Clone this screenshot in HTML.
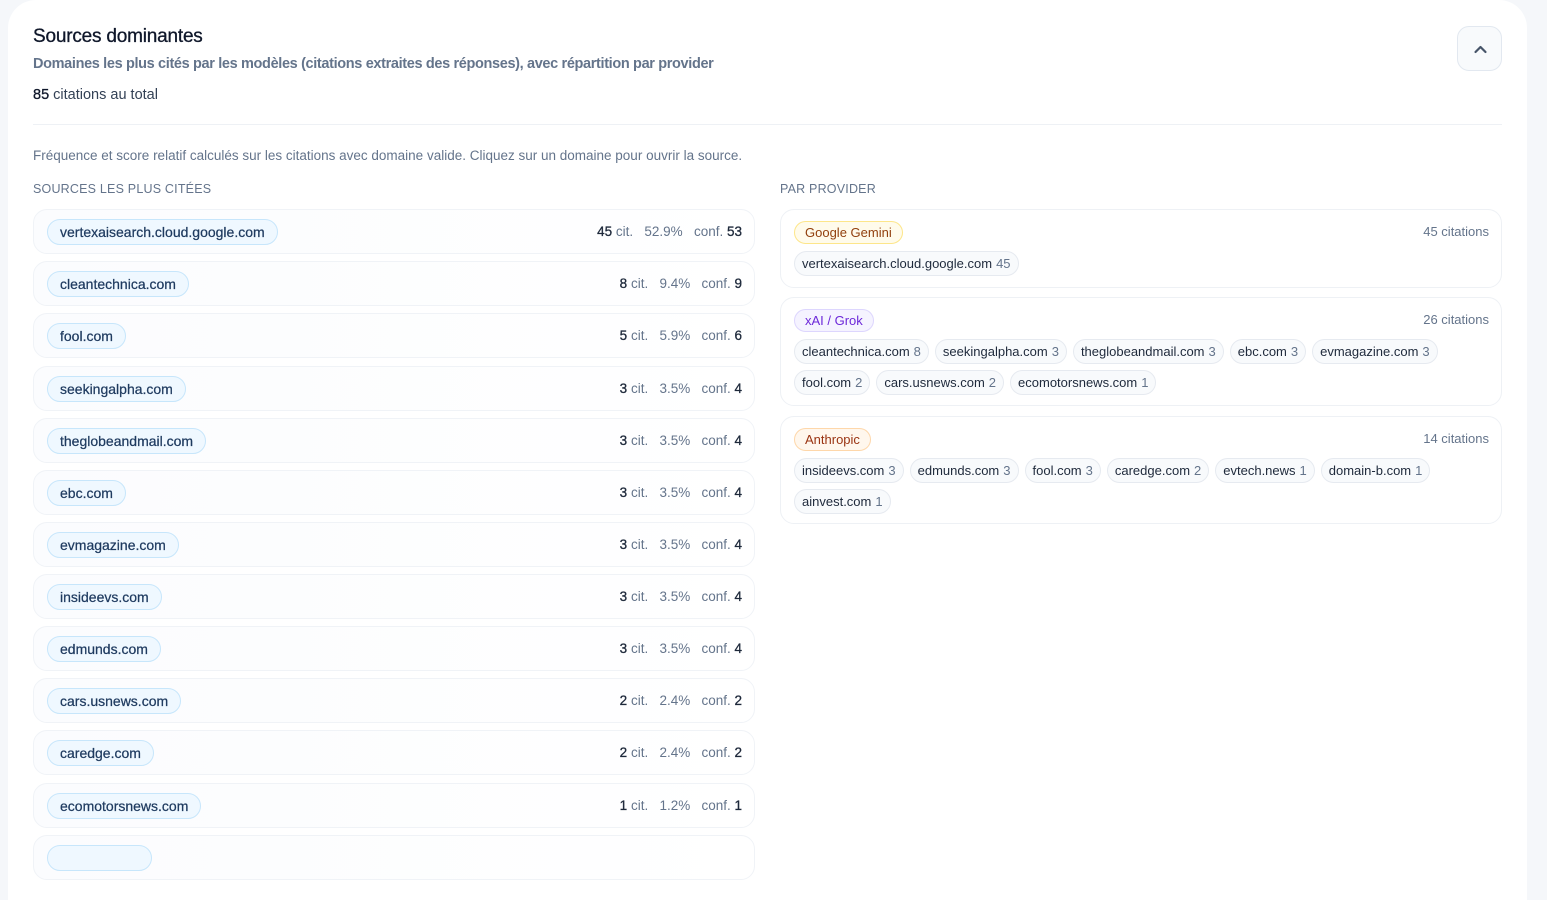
<!DOCTYPE html>
<html><head><meta charset="utf-8"><style>
*{box-sizing:border-box;margin:0;padding:0}
body{width:1547px;height:845px;overflow:hidden;background:#f5f7fa;font-family:"Liberation Sans",sans-serif;color:#0f172a}
.card{position:absolute;left:8px;top:0;width:1519px;height:900px;background:#fff;border-top-right-radius:28px;border-top-left-radius:28px}
.abs{position:absolute}
h1{position:absolute;left:33px;top:26px;font-size:19px;font-weight:400;letter-spacing:-0.2px;color:#0f172a;-webkit-text-stroke:0.3px #0f172a}
.sub{left:33px;top:56px;font-size:14.5px;color:#64748b;font-weight:700;letter-spacing:-0.35px}
.tot{left:33px;top:87px;font-size:14.5px;color:#334155}
.tot b{color:#0f172a;font-weight:400;-webkit-text-stroke:0.3px #0f172a}
.hr{left:33px;top:124px;width:1469px;height:1px;background:#eef1f5}
.btn{left:1457px;top:26px;width:45px;height:45px;border:1px solid #e2e8f0;border-radius:12px;background:#f8fafc}
.note{left:33px;top:148px;font-size:13.5px;color:#64748b}
.lab{font-size:12.5px;color:#64748b;letter-spacing:0.2px;top:182px}
.row{position:absolute;left:33px;width:722px;height:45px;border:1px solid #f0f3f7;border-radius:14px;background:linear-gradient(90deg,#fbfcfe,#fff)}
.pill{position:absolute;left:13px;top:9px;height:26px;padding:0 12px;border:1px solid #c7e6fb;background:#eff8ff;border-radius:13px;font-size:14px;line-height:24px;color:#1e3a5f;-webkit-text-stroke:0.25px #1e3a5f}
.st{position:absolute;right:12px;top:14px;font-size:13.5px;color:#64748b;white-space:pre}
.st b{color:#1e293b;font-weight:400;-webkit-text-stroke:0.3px #1e293b}
.pc{position:absolute;left:780px;width:722px;border:1px solid #eef1f5;border-radius:14px;background:#fff}
.tag{position:absolute;left:13px;top:11px;height:23px;padding:0 10px;border-radius:12px;font-size:13px;line-height:21px}
.cnt{position:absolute;right:12px;top:14px;font-size:13px;color:#64748b}
.chips{position:absolute;left:13px;right:12px;display:flex;flex-wrap:wrap;gap:6px 6px}
.chip{height:25px;padding:0 7px;border:1px solid #e6eaf0;background:#f8fafc;border-radius:13px;font-size:13px;line-height:23px;color:#1e293b}
.chip span{color:#64748b;margin-left:4px}
</style></head><body>
<div class="card"></div>
<h1>Sources dominantes</h1>
<div class="abs sub">Domaines les plus cités par les modèles (citations extraites des réponses), avec répartition par provider</div>
<div class="abs tot"><b>85</b> citations au total</div>
<div class="abs btn"><svg width="45" height="45" viewBox="0 0 45 45"><path d="M17.5 25l5-5 5 5" fill="none" stroke="#475569" stroke-width="2.2" stroke-linecap="round" stroke-linejoin="round"/></svg></div>
<div class="abs hr"></div>
<div class="abs note">Fréquence et score relatif calculés sur les citations avec domaine valide. Cliquez sur un domaine pour ouvrir la source.</div>
<div class="abs lab" style="left:33px">SOURCES LES PLUS CITÉES</div>
<div class="abs lab" style="left:780px">PAR PROVIDER</div>

<div class="row" style="top:209px"><div class="pill">vertexaisearch.cloud.google.com</div><div class="st"><b>45</b> cit.   52.9%   conf. <b>53</b></div></div>
<div class="row" style="top:261px"><div class="pill">cleantechnica.com</div><div class="st"><b>8</b> cit.   9.4%   conf. <b>9</b></div></div>
<div class="row" style="top:313px"><div class="pill">fool.com</div><div class="st"><b>5</b> cit.   5.9%   conf. <b>6</b></div></div>
<div class="row" style="top:366px"><div class="pill">seekingalpha.com</div><div class="st"><b>3</b> cit.   3.5%   conf. <b>4</b></div></div>
<div class="row" style="top:418px"><div class="pill">theglobeandmail.com</div><div class="st"><b>3</b> cit.   3.5%   conf. <b>4</b></div></div>
<div class="row" style="top:470px"><div class="pill">ebc.com</div><div class="st"><b>3</b> cit.   3.5%   conf. <b>4</b></div></div>
<div class="row" style="top:522px"><div class="pill">evmagazine.com</div><div class="st"><b>3</b> cit.   3.5%   conf. <b>4</b></div></div>
<div class="row" style="top:574px"><div class="pill">insideevs.com</div><div class="st"><b>3</b> cit.   3.5%   conf. <b>4</b></div></div>
<div class="row" style="top:626px"><div class="pill">edmunds.com</div><div class="st"><b>3</b> cit.   3.5%   conf. <b>4</b></div></div>
<div class="row" style="top:678px"><div class="pill">cars.usnews.com</div><div class="st"><b>2</b> cit.   2.4%   conf. <b>2</b></div></div>
<div class="row" style="top:730px"><div class="pill">caredge.com</div><div class="st"><b>2</b> cit.   2.4%   conf. <b>2</b></div></div>
<div class="row" style="top:783px"><div class="pill">ecomotorsnews.com</div><div class="st"><b>1</b> cit.   1.2%   conf. <b>1</b></div></div>
<div class="row" style="top:835px"><div class="pill" style="width:105px"></div></div>

<div class="pc" style="top:209px;height:79px">
<div class="tag" style="background:#fffbeb;border:1px solid #fde68a;color:#92400e">Google Gemini</div>
<div class="cnt">45 citations</div>
<div class="chips" style="top:41px"><div class="chip">vertexaisearch.cloud.google.com<span>45</span></div></div>
</div>
<div class="pc" style="top:297px;height:109px">
<div class="tag" style="background:#f5f3ff;border:1px solid #ddd6fe;color:#6d28d9">xAI / Grok</div>
<div class="cnt">26 citations</div>
<div class="chips" style="top:41px"><div class="chip">cleantechnica.com<span>8</span></div><div class="chip">seekingalpha.com<span>3</span></div><div class="chip">theglobeandmail.com<span>3</span></div><div class="chip">ebc.com<span>3</span></div><div class="chip">evmagazine.com<span>3</span></div><div class="chip">fool.com<span>2</span></div><div class="chip">cars.usnews.com<span>2</span></div><div class="chip">ecomotorsnews.com<span>1</span></div></div>
</div>
<div class="pc" style="top:416px;height:108px">
<div class="tag" style="background:#fff7ed;border:1px solid #fed7aa;color:#9a3412">Anthropic</div>
<div class="cnt">14 citations</div>
<div class="chips" style="top:41px"><div class="chip">insideevs.com<span>3</span></div><div class="chip">edmunds.com<span>3</span></div><div class="chip">fool.com<span>3</span></div><div class="chip">caredge.com<span>2</span></div><div class="chip">evtech.news<span>1</span></div><div class="chip">domain-b.com<span>1</span></div><div class="chip">ainvest.com<span>1</span></div></div>
</div>
</body></html>
